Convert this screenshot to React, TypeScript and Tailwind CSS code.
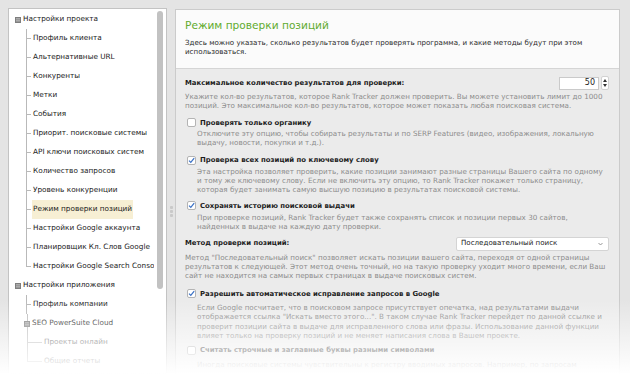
const lineColor = 'border-[#b9b9b9]';

const ExpandIcon = () => (
  <svg width="6" height="6" viewBox="0 0 6 6" className="shrink-0">
    <rect x="0" y="0" width="6" height="6" fill="#7e7e7e" />
    <rect x="1" y="1.5" width="4" height="0.8" fill="#d8d8d8" />
    <rect x="1" y="3.5" width="4" height="0.8" fill="#d8d8d8" />
  </svg>
);

type ChildProps = { label: string; last?: boolean; selected?: boolean; wide?: boolean };

const TreeChild = ({ label, last, selected, wide }: ChildProps) => (
  <div className="flex h-[19px]">
    <div className={wide ? 'flex flex-col w-[15px] shrink-0' : 'flex flex-col w-[5px] shrink-0'}>
      <div className={`h-[10px] border-l border-b ${lineColor}`} />
      {!last && <div className={`flex-1 border-l ${lineColor}`} />}
    </div>
    <span
      className={
        selected
          ? 'ml-px px-px flex items-center whitespace-nowrap bg-[#f7efd4]'
          : 'ml-px px-px flex items-center whitespace-nowrap'
      }
    >
      {label}
    </span>
  </div>
);

const TreeRoot = ({ label }: { label: string }) => (
  <div className="flex items-center h-[19px] gap-[2px] pl-[6px] whitespace-nowrap">
    <ExpandIcon />
    <span>{label}</span>
  </div>
);

const projectItems = [
  'Профиль клиента',
  'Альтернативные URL',
  'Конкуренты',
  'Метки',
  'События',
  'Приорит. поисковые системы',
  'API ключи поисковых систем',
  'Количество запросов',
  'Уровень конкуренции',
  'Режим проверки позиций',
  'Настройки Google аккаунта',
  'Планировщик Кл. Слов Google',
  'Настройки Google Search Console',
];

const Checkbox = ({ checked }: { checked?: boolean }) => (
  <span className="w-[9px] h-[9px] shrink-0 bg-white border border-[#b4b4b4] rounded-[2px] flex items-center justify-center">
    {checked && (
      <svg width="7" height="7" viewBox="0 0 7 7">
        <path d="M1 3.6 L2.8 5.4 L6.2 1.2" fill="none" stroke="#3d73c6" strokeWidth="1.3" />
      </svg>
    )}
  </span>
);

const Desc = ({ lines, indent, mt }: { lines: string[]; indent?: boolean; mt: string }) => (
  <div className={`${indent ? 'ml-[12px]' : ''} ${mt} text-[7.2px] leading-[9.4px] text-[#8b8b8b] whitespace-nowrap`}>
    {lines.map((l) => (
      <div key={l}>{l}</div>
    ))}
  </div>
);

const Option = ({ label, checked, mt }: { label: string; checked?: boolean; mt: string }) => (
  <div className={`flex items-center h-[12px] gap-[4px] ml-[2px] ${mt}`}>
    <Checkbox checked={checked} />
    <span className="font-bold text-[6.9px] text-[#1c1c1c] whitespace-nowrap">{label}</span>
  </div>
);

export default function App() {
  return (
    <div className="relative w-[630px] h-[374px] overflow-hidden bg-[#e4e4e4] flex font-['DejaVu_Sans',sans-serif] text-[7.1px] text-[#222]">
      {/* left tree */}
      <div className="mt-[8px] ml-[8px] w-[159px] bg-white border border-[#c3c3c3] flex text-[7.3px]">
        <div className="flex-1 min-w-0 overflow-hidden pt-[1px]">
          <TreeRoot label="Настройки проекта" />
          <div className="ml-[17px]">
            {projectItems.map((item, i) => (
              <TreeChild
                key={item}
                label={item}
                last={i === projectItems.length - 1}
                selected={item === 'Режим проверки позиций'}
              />
            ))}
          </div>
          <TreeRoot label="Настройки приложения" />
          <div className="ml-[17px]">
            <TreeChild label="Профиль компании" />
            <div className="flex h-[19px] items-center whitespace-nowrap">
              <div className="flex flex-col items-center -ml-[2px] w-[6px] h-full">
                <div className={`h-[7px] border-l ${lineColor}`} />
                <ExpandIcon />
                <div className={`flex-1 border-l ${lineColor}`} />
              </div>
              <span className="ml-[2px]">SEO PowerSuite Cloud</span>
            </div>
            <div className="ml-px text-[#555]">
              <TreeChild label="Проекты онлайн" wide />
              <TreeChild label="Общие отчеты" wide last />
            </div>
          </div>
        </div>
        <div className="w-[12px] shrink-0 flex justify-center">
          <div className="w-[6px] h-[278px] mt-[2px] rounded-full bg-[#c2c2c2]" />
        </div>
      </div>

      {/* splitter */}
      <div className="w-[8px] shrink-0 flex flex-col items-center pt-[206px] gap-[1px]">
        <span className="w-[3px] h-[3px] rounded-[1px] bg-[#c9c9c9]" />
        <span className="w-[3px] h-[3px] rounded-[1px] bg-[#c9c9c9]" />
        <span className="w-[3px] h-[3px] rounded-[1px] bg-[#c9c9c9]" />
      </div>

      {/* right settings */}
      <div className="mt-[9px] w-[445px] shrink-0 border border-b-0 border-[#cbcbcb] flex flex-col">
        <div className="h-[59px] shrink-0 bg-[#fbfbfb] border-b border-[#d5d5d5] px-[9px] pt-[8px]">
          <div className="text-[10.6px] leading-[14px] text-[#62ab2f]">Режим проверки позиций</div>
          <div className="mt-[6px] leading-[9.4px] text-[#2a2a2a] whitespace-nowrap">
            <div>Здесь можно указать, сколько результатов будет проверять программа, и какие методы будут при этом</div>
            <div>использоваться.</div>
          </div>
        </div>

        <div className="flex-1 bg-[#ebebeb] pl-[9px] pr-[10px] pt-[7px]">
          <div className="flex items-center justify-between h-[14px]">
            <span className="font-bold text-[6.9px] text-[#1c1c1c]">Максимальное количество результатов для проверки:</span>
            <div className="flex items-center gap-[2px]">
              <div className="w-[40px] h-[13px] bg-white border border-[#cacaca] flex items-center justify-end pr-[3px] text-[8px] text-[#222]">
                50
              </div>
              <div className="w-[8px] h-[14px] bg-white border border-[#d2d2d2] rounded-[2px] flex flex-col items-center justify-center gap-[2px]">
                <svg width="4" height="3" viewBox="0 0 4 3">
                  <path d="M0 3 L2 0 L4 3 Z" fill="#333" />
                </svg>
                <svg width="4" height="3" viewBox="0 0 4 3">
                  <path d="M0 0 L4 0 L2 3 Z" fill="#333" />
                </svg>
              </div>
            </div>
          </div>
          <Desc
            mt="mt-[2px]"
            lines={[
              'Укажите кол-во результатов, которое Rank Tracker должен проверить. Вы можете установить лимит до 1000',
              'позиций. Это максимальное кол-во результатов, которое может показать любая поисковая система.',
            ]}
          />

          <Option mt="mt-[6px]" label="Проверять только органику" />
          <Desc
            indent
            mt="mt-0"
            lines={[
              'Отключите эту опцию, чтобы собирать результаты и по SERP Features (видео, изображения, локальную',
              'выдачу, новости, покупки и т.д.).',
            ]}
          />

          <Option mt="mt-[7px]" checked label="Проверка всех позиций по ключевому слову" />
          <Desc
            indent
            mt="mt-0"
            lines={[
              'Эта настройка позволяет проверить, какие позиции занимают разные страницы Вашего сайта по одному',
              'и тому же ключевому слову. Если не включить эту опцию, то Rank Tracker покажет только страницу,',
              'которая будет занимать самую высшую позицию в результатах поисковой системы.',
            ]}
          />

          <Option mt="mt-[5px]" checked label="Сохранять историю поисковой выдачи" />
          <Desc
            indent
            mt="mt-px"
            lines={[
              'При проверке позиций, Rank Tracker будет также сохранять список и позиции первых 30 сайтов,',
              'найденных в выдаче на каждую дату проверки.',
            ]}
          />

          <div className="flex items-center justify-between h-[14px] mt-[5px]">
            <span className="font-bold text-[6.9px] text-[#1c1c1c]">Метод проверки позиций:</span>
            <div className="w-[153px] h-[14px] bg-white border border-[#d4d4d4] rounded-[2px] flex items-center justify-between pl-[4px] pr-[5px] text-[#222]">
              <span>Последовательный поиск</span>
              <svg width="5" height="4" viewBox="0 0 5 4">
                <path d="M0.5 1 L2.5 3 L4.5 1" fill="none" stroke="#8a8a8a" strokeWidth="0.9" />
              </svg>
            </div>
          </div>
          <Desc
            mt="mt-[2px]"
            lines={[
              'Метод "Последовательный поиск" позволяет искать позиции вашего сайта, переходя от одной страницы',
              'результатов к следующей. Этот метод очень точный, но на такую проверку уходит много времени, если Ваш',
              'сайт не находится на самых первых страницах в выдаче поисковых систем.',
            ]}
          />

          <Option mt="mt-[7px]" checked label="Разрешить автоматическое исправление запросов в Google" />
          <Desc
            indent
            mt="mt-[3px]"
            lines={[
              'Если Google посчитает, что в поисковом запросе присутствует опечатка, над результатами выдачи',
              'отображается ссылка "Искать вместо этого...". В таком случае  Rank Tracker перейдет по данной ссылке и',
              'проверит позиции сайта в выдаче для исправленного слова или фразы. Использование данной функции',
              'влияет только на проверку позиций и не меняет написания слова в Вашем проекте.',
            ]}
          />

          <Option mt="mt-[4px]" label="Считать строчные и заглавные буквы разными символами" />
          <Desc
            indent
            mt="mt-[3px]"
            lines={['Иногда поисковые системы чувствительны к регистру вводимых запросов. Например, по запросам']}
          />
        </div>
      </div>

      {/* fade at the bottom */}
      <div className="absolute inset-x-0 bottom-0 h-[74px] bg-linear-to-b from-white/0 to-white pointer-events-none" />
    </div>
  );
}
